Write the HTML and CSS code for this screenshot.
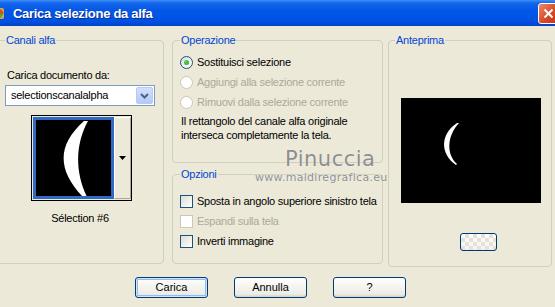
FILE: index.html
```html
<!DOCTYPE html>
<html lang="it">
<head>
    <meta charset="UTF-8">
    <meta name="viewport" content="width=device-width, initial-scale=1.0">
    <title>Carica selezione da alfa</title>
    <link rel="stylesheet" href="styles.css">
</head>
<body>
    <div class="window">
        <div class="titlebar">
            <svg class="app-icon" width="16" height="16" viewBox="0 0 16 16">
                <rect x="2" y="3" width="12" height="11" rx="2" fill="#E8A33A"/>
                <path d="M9 2 L14 8 L10 14 Z" fill="#4FA83D"/>
                <circle cx="11" cy="7" r="2" fill="#D94B2B"/>
            </svg>
            <span class="title">Carica selezione da alfa</span>
            <span class="close">
                <svg width="11" height="11" viewBox="0 0 11 11">
                    <path d="M1.5 1.5 L9.5 9.5 M9.5 1.5 L1.5 9.5" stroke="#fff" stroke-width="2"/>
                </svg>
            </span>
        </div>

        <div class="content">
            <div class="groups">
                <fieldset class="group group-alpha">
                    <legend>Canali alfa</legend>
                    <div class="field-label">Carica documento da:</div>
                    <div class="select">
                        <span class="select-value">selectionscanalalpha</span>
                        <span class="select-arrow">
                            <svg width="9" height="6" viewBox="0 0 9 6">
                                <path d="M1 1 L4.5 4.5 L8 1" fill="none" stroke="#4D6185" stroke-width="2"/>
                            </svg>
                        </span>
                    </div>
                    <div class="thumb-picker">
                        <div class="thumb">
                            <svg width="76" height="76" viewBox="0 0 76 76">
                                <path d="M48 1 C21 25 21 50 47 77 L51 77 C39 52 39 25 52 1 Z" fill="#fff"/>
                            </svg>
                        </div>
                        <div class="thumb-drop">
                            <svg width="7" height="4" viewBox="0 0 7 4"><path d="M0 0 H7 L3.5 4 Z" fill="#000"/></svg>
                        </div>
                    </div>
                    <div class="thumb-name">Sélection #6</div>
                </fieldset>

                <div class="middle">
                    <fieldset class="group group-op">
                        <legend>Operazione</legend>
                        <div class="option">
                            <span class="radio checked"></span>
                            <span>Sostituisci selezione</span>
                        </div>
                        <div class="option disabled">
                            <span class="radio"></span>
                            <span>Aggiungi alla selezione corrente</span>
                        </div>
                        <div class="option disabled">
                            <span class="radio"></span>
                            <span>Rimuovi dalla selezione corrente</span>
                        </div>
                        <p class="note">Il rettangolo del canale alfa originale<br>interseca completamente la tela.</p>
                    </fieldset>

                    <fieldset class="group group-opts">
                        <legend>Opzioni</legend>
                        <div class="option">
                            <span class="check"></span>
                            <span>Sposta in angolo superiore sinistro tela</span>
                        </div>
                        <div class="option disabled">
                            <span class="check"></span>
                            <span>Espandi sulla tela</span>
                        </div>
                        <div class="option">
                            <span class="check"></span>
                            <span>Inverti immagine</span>
                        </div>
                    </fieldset>
                </div>

                <fieldset class="group group-preview">
                    <legend>Anteprima</legend>
                    <div class="preview">
                        <svg width="140" height="105" viewBox="0 0 140 105">
                            <path d="M56 25 C39 36 39 56 55 67 L56 66 C45 56 46 38 58 25 Z" fill="#fff"/>
                        </svg>
                    </div>
                    <button class="zoom-btn" type="button"></button>
                </fieldset>
            </div>

            <div class="buttons">
                <button class="btn btn-default" type="button">Carica</button>
                <button class="btn" type="button">Annulla</button>
                <button class="btn" type="button">?</button>
            </div>
        </div>

        <div class="watermark">
            <div class="wm-name">Pinuccia</div>
            <div class="wm-site">www.maidiregrafica.eu</div>
        </div>
    </div>
</body>
</html>
```

FILE: styles.css
```css
body {
    margin: 0;
    background-color: #ECE9D8;
    font-family: "Liberation Sans", Arial, sans-serif;
    font-size: 11px;
    line-height: 13px;
    letter-spacing: -0.25px;
    color: #000;
    overflow: hidden;
}
.window {
    position: relative;
    width: 555px;
    height: 307px;
    overflow: hidden;
}
.titlebar {
    height: 26px;
    display: flex;
    align-items: center;
    color: #fff;
    background: linear-gradient(#3D8EF5 0, #1466EC 3px, #0458E6 10px, #0055E6 60%, #0050E0 85%, #0041C2 100%);
}
.app-icon {
    margin-left: -10px;
    margin-right: 7px;
    flex: none;
}
.title {
    flex: 1;
    font-weight: bold;
    font-size: 13px;
    letter-spacing: -0.3px;
    text-shadow: 1px 1px #0B2C8C;
}
.close {
    width: 21px;
    height: 21px;
    margin-right: -4px;
    box-sizing: border-box;
    border: 1px solid #fff;
    border-radius: 3px;
    background: linear-gradient(135deg, #E98A6B, #D9441F 60%, #C2361A);
    display: flex;
    align-items: center;
    justify-content: center;
}
.content {
    padding-top: 7px;
}
.groups {
    display: flex;
    height: 234px;
}
.group {
    margin: 0;
    padding: 0 7px;
    min-width: 0;
    box-sizing: border-box;
    border: 1px solid #D0D0BF;
    border-radius: 4px;
}
.group legend {
    padding: 0 1px;
    color: #0046D5;
    line-height: 14px;
}
.group-alpha {
    width: 168px;
    height: 231px;
    margin-left: -4px;
    padding: 22px 8px 0;
}
.field-label {
    margin-left: 2px;
    margin-bottom: 3px;
}
.select {
    display: flex;
    width: 150px;
    height: 21px;
    box-sizing: border-box;
    border: 1px solid #7F9DB9;
    background-color: #fff;
}
.select-value {
    flex: 1;
    padding-left: 5px;
    line-height: 19px;
}
.select-arrow {
    width: 15px;
    margin: 1px;
    border-radius: 2px;
    border: 1px solid #B7C9F4;
    background: linear-gradient(#D2DFFD, #B5C9F7);
    display: flex;
    align-items: center;
    justify-content: center;
}
.thumb-picker {
    display: flex;
    width: 101px;
    height: 86px;
    margin: 9px 0 0 26px;
    box-sizing: border-box;
    border: 1px solid #000;
    padding: 1px 0 1px 1px;
}
.thumb {
    width: 81px;
    box-sizing: border-box;
    border: 3px solid #316AC5;
    background-color: #000;
    overflow: hidden;
}
.thumb-drop {
    flex: 1;
    border: 1px solid;
    border-color: #fff #ACA899 #ACA899 #fff;
    display: flex;
    align-items: center;
    justify-content: center;
}
.thumb-name {
    margin-top: 11px;
    text-align: center;
}
.middle {
    width: 211px;
    margin-left: 8px;
    display: flex;
    flex-direction: column;
    gap: 4px;
}
.group-op {
    height: 130px;
    padding-top: 5px;
}
.group-opts {
    height: 97px;
    padding-top: 10px;
}
.option {
    display: flex;
    align-items: center;
    gap: 4px;
    height: 20px;
    white-space: nowrap;
}
.option.disabled {
    color: #ACA899;
}
.radio,
.check {
    width: 13px;
    height: 13px;
    flex: none;
    box-sizing: border-box;
    border: 1px solid #1C5180;
    background: linear-gradient(135deg, #DCDCD7, #fff);
}
.radio {
    border-radius: 50%;
    display: flex;
    align-items: center;
    justify-content: center;
}
.radio.checked::after {
    content: "";
    width: 5px;
    height: 5px;
    border-radius: 50%;
    background: radial-gradient(circle at 35% 35%, #5ED25E, #21A121);
}
.disabled .radio,
.disabled .check {
    border-color: #CAC8BB;
    background: #fff;
}
.note {
    margin: 2px 0 0 1px;
    line-height: 14px;
}
.group-preview {
    width: 164px;
    height: 234px;
    margin-left: 5px;
    padding: 0 6px;
}
.preview {
    width: 140px;
    height: 105px;
    margin: 51px 0 0 6px;
    background-color: #000;
}
.preview svg {
    display: block;
}
.zoom-btn {
    display: block;
    width: 37px;
    height: 18px;
    margin: 30px 0 0 65px;
    border: 1px solid #003C74;
    border-radius: 3px;
    background:
        linear-gradient(45deg, #E4E2DA 25%, transparent 25%, transparent 75%, #E4E2DA 75%) 0 0 / 8px 8px,
        linear-gradient(45deg, #E4E2DA 25%, transparent 25%, transparent 75%, #E4E2DA 75%) 4px 4px / 8px 8px,
        linear-gradient(#fff, #F1F0EB);
}
.buttons {
    display: flex;
    gap: 26px;
    padding-left: 135px;
    margin-top: 10px;
}
.btn {
    width: 73px;
    height: 21px;
    padding: 0;
    border: 1px solid #003C74;
    border-radius: 3px;
    background: linear-gradient(#fff, #F4F3EE 50%, #ECEBE6 85%, #D6D0C5);
    font: inherit;
    color: #000;
}
.btn-default {
    box-shadow: inset 0 0 0 1px #CEE7FF, inset 0 0 0 2px #98B8EA;
}
.watermark {
    position: absolute;
    left: 255px;
    top: 147px;
    width: 122px;
    color: #8E8E8E;
    text-shadow: 0 0 1px #fff;
    letter-spacing: 0;
    pointer-events: none;
}
.wm-name {
    padding-left: 30px;
    font-family: "DejaVu Sans", sans-serif;
    font-size: 21px;
    line-height: 24px;
    letter-spacing: 0.5px;
}
.wm-site {
    font-family: "DejaVu Sans", sans-serif;
    font-size: 11px;
    line-height: 14px;
    letter-spacing: 0.3px;
}
```
